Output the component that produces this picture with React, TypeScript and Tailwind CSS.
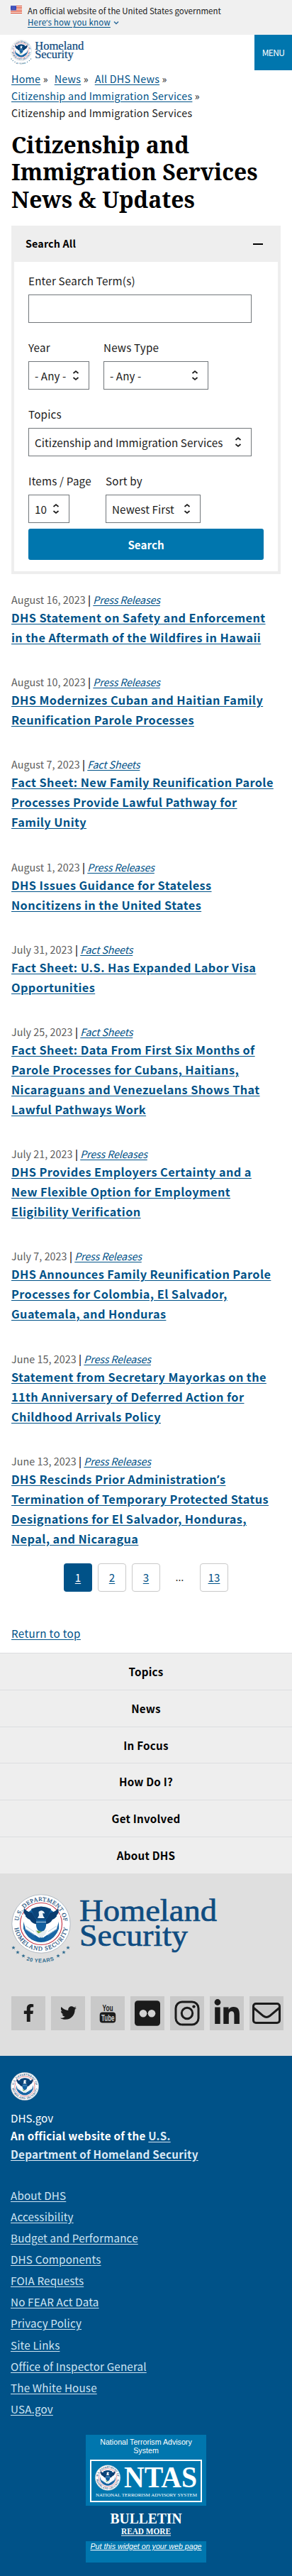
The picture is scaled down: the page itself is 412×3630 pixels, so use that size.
import React from "react";
import { FaFacebookF, FaTwitter } from "react-icons/fa";

const news: { date: string; kind: string; lines: string[] }[] = [
  { date: "August 16, 2023", kind: "Press Releases", lines: ["DHS Statement on Safety and Enforcement", "in the Aftermath of the Wildfires in Hawaii"] },
  { date: "August 10, 2023", kind: "Press Releases", lines: ["DHS Modernizes Cuban and Haitian Family", "Reunification Parole Processes"] },
  { date: "August 7, 2023", kind: "Fact Sheets", lines: ["Fact Sheet: New Family Reunification Parole", "Processes Provide Lawful Pathway for", "Family Unity"] },
  { date: "August 1, 2023", kind: "Press Releases", lines: ["DHS Issues Guidance for Stateless", "Noncitizens in the United States"] },
  { date: "July 31, 2023", kind: "Fact Sheets", lines: ["Fact Sheet: U.S. Has Expanded Labor Visa", "Opportunities"] },
  { date: "July 25, 2023", kind: "Fact Sheets", lines: ["Fact Sheet: Data From First Six Months of", "Parole Processes for Cubans, Haitians,", "Nicaraguans and Venezuelans Shows That", "Lawful Pathways Work"] },
  { date: "July 21, 2023", kind: "Press Releases", lines: ["DHS Provides Employers Certainty and a", "New Flexible Option for Employment", "Eligibility Verification"] },
  { date: "July 7, 2023", kind: "Press Releases", lines: ["DHS Announces Family Reunification Parole", "Processes for Colombia, El Salvador,", "Guatemala, and Honduras"] },
  { date: "June 15, 2023", kind: "Press Releases", lines: ["Statement from Secretary Mayorkas on the", "11th Anniversary of Deferred Action for", "Childhood Arrivals Policy"] },
  { date: "June 13, 2023", kind: "Press Releases", lines: ["DHS Rescinds Prior Administration’s", "Termination of Temporary Protected Status", "Designations for El Salvador, Honduras,", "Nepal, and Nicaragua"] },
];

const sections = ["Topics", "News", "In Focus", "How Do I?", "Get Involved", "About DHS"];

const footerLinks = ["About DHS", "Accessibility", "Budget and Performance", "DHS Components", "FOIA Requests", "No FEAR Act Data", "Privacy Policy", "Site Links", "Office of Inspector General", "The White House", "USA.gov"];

/* The CJK face sets the apostrophe full width, so it takes its own font. */
function Latin({ text }: { text: string }) {
  const parts = text.split("’");
  return (
    <>
      {parts.map((p, i) => (
        <React.Fragment key={i}>
          {i > 0 && <span className="font-['Open_Sans'] leading-none">’</span>}
          {p}
        </React.Fragment>
      ))}
    </>
  );
}

/* Department seal, drawn in an 84x84 box centred on 42,42 */
function SealArt({ id }: { id: string }) {
  return (
    <g>
      <circle cx="42" cy="42" r="41.2" fill="#fff" stroke="#b4bcc4" strokeWidth="1" />
      <defs>
        <path id={id + "t"} d="M10 42a32 32 0 0 1 64 0" />
        <path id={id + "b"} d="M4.200 42a37.800 37.800 0 0 0 75.600 0" />
      </defs>
      <text fontFamily="Liberation Serif" fontSize="8.400" fill="#1c4f7c" stroke="#1c4f7c" strokeWidth=".2">
        <textPath href={"#" + id + "t"} startOffset="4" textLength="93">U.S. DEPARTMENT OF</textPath>
      </text>
      <text fontFamily="Liberation Serif" fontSize="8.400" fill="#1c4f7c" stroke="#1c4f7c" strokeWidth=".2">
        <textPath href={"#" + id + "b"} startOffset="6" textLength="107">HOMELAND SECURITY</textPath>
      </text>
      <circle cx="42" cy="42" r="29.500" fill="#fff" stroke="#c8394a" strokeWidth="1.200" />
      <circle cx="42" cy="43" r="25" fill="#1260a0" />
      <path d="M14 28l6 21 20 13V44zM70 28l-6 21-20 13V44z" fill="#fff" />
      <path d="M17 42l2 8 12 7 5 9q-14-3-19-17zM67 42l-2 8-12 7-5 9q14-3 19-17z" fill="#1a66a5" />
      <path d="M20 45l12 8M19 49l14 9M64 45l-12 8M65 49l-14 9" stroke="#a9c6de" strokeWidth=".8" />
      <path d="M28 21q14-7 28 0l-4 10-4 5H36l-4-5z" fill="#0b4479" />
      <path d="M18 20q5 6 11 6l4 7 5 6v4q-9-1-12-7-5-2-6-6-4-4-2-10zM66 20q-5 6-11 6l-4 7-5 6v4q9-1 12-7 5-2 6-6 4-4 2-10z" fill="#0a3d70" />
      <path d="M38.500 25q4-3.500 7.500 0l1.200 2.500-3-.5.800 4 2 3H37l2-4z" fill="#eef4f8" />
      <path d="M35 36h14v9q-1 7-7 9-6-2-7-9z" fill="#14609f" />
      <path d="M35 39.500h14" stroke="#dbe8f1" strokeWidth=".8" />
      <path d="M33 50l9 3 9-3-3 7-6 5-6-5z" fill="#e4edf0" />
      <path d="M35 51.500l8 1.500-5 2.500z" fill="#6fa844" />
    </g>
  );
}

function Seal({ id, className }: { id: string; className: string }) {
  return (
    <svg viewBox="0 0 84 84" className={className}>
      <SealArt id={id} />
    </svg>
  );
}

function Star({ x, y }: { x: number; y: number }) {
  return <path transform={`translate(${x} ${y})`} d="M0-2.600L.8-.8 2.700-.7 1.200.5 1.700 2.400 0 1.300-1.700 2.400-1.200.5-2.700-.7-.8-.8z" fill="#2d6a8e" />;
}

function DhsLogo({ id, className }: { id: string; className: string }) {
  return (
    <svg viewBox="0 0 292 100" className={className} role="img" aria-label="Homeland Security">
      <SealArt id={id} />
      <Star x={3} y={75.5} />
      <Star x={9} y={82} />
      <Star x={17} y={87} />
      <Star x={66} y={87} />
      <Star x={74} y={82} />
      <Star x={80} y={75.5} />
      <path id={id + "y"} d="M20 93q21 7 42 0" fill="none" />
      <text fontFamily="Liberation Sans" fontSize="7.500" fontWeight="bold" fill="#2d6a8e">
        <textPath href={"#" + id + "y"} startOffset="1" textLength="40">20 YEARS</textPath>
      </text>
      <g fontFamily="Liberation Serif" fill="#0f4c81" stroke="#0f4c81" strokeWidth=".7" fontSize="44">
        <text x="96" y="38" textLength="194" lengthAdjust="spacingAndGlyphs">Homeland</text>
        <text x="96" y="73" textLength="153" lengthAdjust="spacingAndGlyphs">Security</text>
      </g>
    </svg>
  );
}

function Flag() {
  return (
    <svg viewBox="0 0 16 11" className="mt-2 h-[11px] w-4 shrink-0">
      <rect width="16" height="11" fill="#fff" />
      <path d="M0 .5h16M0 2.500h16M0 4.500h16M0 6.500h16M0 8.500h16M0 10.500h16" stroke="#db3e1f" strokeWidth="1" />
      <rect width="8" height="6.500" fill="#1e33b1" />
      <path d="M.5 1.200h7M1.500 3.200h6M.5 5.200h7" stroke="#fff" strokeWidth=".7" strokeDasharray="1 1" />
    </svg>
  );
}

function SelectBox({ value, className }: { value: string; className: string }) {
  return (
    <div className={"flex h-10 items-center justify-between border border-[#71767a] pl-2 pr-[13px] " + className}>
      <span className="whitespace-pre text-[15.200px] leading-[22px] tracking-[0.090px]">{value}</span>
      <svg viewBox="0 0 10 16" className="h-4 w-[10px]" fill="none" stroke="#1b1b1b" strokeWidth="1.700">
        <path d="M1.500 5L5 2l3.500 3M1.500 11L5 14l3.500-3" />
      </svg>
    </div>
  );
}

function Field({ label, children }: { label: string; children: React.ReactNode }) {
  return (
    <div>
      <div className="h-[31px] whitespace-nowrap text-[15.200px] leading-[22px] tracking-[0.190px]">{label}</div>
      {children}
    </div>
  );
}

function Tile({ children }: { children: React.ReactNode }) {
  return <a className="flex size-12 items-center justify-center bg-[#c9c9c9] text-[#1b1b1b]">{children}</a>;
}

const link = "text-[#005288] underline underline-offset-2";
const pageBox = "flex size-10 items-center justify-center rounded border border-[#c9c9c9] pb-px text-[#005288] underline underline-offset-2";

export default function App() {
  return (
    <div className="h-[3630px] w-[412px] overflow-hidden bg-white font-['Noto_Sans_CJK_SC','Source_Sans_Pro',sans-serif] text-[#1b1b1b]">
      <div className="flex h-[49px] bg-[#f0f0f0] pl-[15px]">
        <Flag />
        <div className="ml-2 pt-[7px] text-[11.500px] leading-4">
          <p className="whitespace-nowrap">An official website of the United States government</p>
          <p className="flex items-center whitespace-nowrap tracking-[0.200px]">
            <span className={link}><Latin text="Here’s how you know" /></span>
            <svg viewBox="0 0 8 6" className="ml-1 mt-0.5 h-1.5 w-2" fill="none" stroke="#2d6a9a" strokeWidth="1.500">
              <path d="M1 1.500l3 3 3-3" />
            </svg>
          </p>
        </div>
      </div>

      <header className="flex h-[50px] justify-between pl-[15px]">
        <DhsLogo id="h" className="mt-[7px] h-[36px] w-[104px]" />
        <div className="flex w-[53px] items-center justify-center bg-[#0076ae] text-[12px] tracking-[-0.700px] text-white">MENU</div>
      </header>

      <nav className="h-[86px] pl-4 text-[14.300px] leading-6 tracking-[0.240px]">
        <div className="flex gap-[9px] whitespace-pre">
          <span><a className={link}>Home</a> »</span>
          <span><a className={link}>News</a> »</span>
          <span><a className={link}>All DHS News</a> »</span>
        </div>
        <div><a className={link}>Citizenship and Immigration Services</a> »</div>
        <div>Citizenship and Immigration Services</div>
      </nav>

      <h1 className="h-[133px] whitespace-nowrap pl-4 font-['Noto_Serif',serif] text-[31.900px] font-bold leading-[38.400px] text-black">
        Citizenship and<br />Immigration Services<br />News &amp; Updates
      </h1>

      <section className="ml-4 h-[491px] w-[380px] border-4 border-t-0 border-[#eeeeee]">
        <div className="flex h-[51px] items-center justify-between bg-[#eeeeee] pl-4 pr-[21px]">
          <h2 className="pb-px text-[14.300px] font-bold tracking-[0.140px] text-black">Search All</h2>
          <span className="h-0.5 w-[14px] bg-black" />
        </div>
        <form className="pl-5 pt-[15px]">
          <Field label="Enter Search Term(s)">
            <div className="h-10 w-[315px] border border-[#71767a]" />
          </Field>
          <div className="mt-[23px] flex gap-5">
            <Field label="Year"><SelectBox value="- Any -" className="w-[86px]" /></Field>
            <Field label="News Type"><SelectBox value="- Any -" className="w-[148px]" /></Field>
          </div>
          <div className="mt-[23px]">
            <Field label="Topics"><SelectBox value="Citizenship and Immigration Services" className="w-[315px]" /></Field>
          </div>
          <div className="mt-[23px] flex gap-[21px]">
            <div className="w-[88px]"><Field label="Items / Page"><SelectBox value="10" className="w-[58px]" /></Field></div>
            <Field label="Sort by"><SelectBox value="Newest First" className="w-[134px]" /></Field>
          </div>
          <button type="button" className="mt-2 h-11 w-[332px] rounded-[3px] bg-[#0076ae] text-[15.200px] font-bold text-white">Search</button>
        </form>
      </section>

      <main className="flex flex-col gap-[37.200px] pl-4 pt-6">
        {news.map((n) => (
          <article key={n.date}>
            <p className="h-[23px] whitespace-pre text-[14.300px] leading-6 tracking-[0.060px] text-[#5c5c5c]">
              {n.date} <span className="font-medium text-black">|</span> <a className="italic tracking-[-0.170px] text-[#005288] underline underline-offset-2">{n.kind}</a>
            </p>
            <h3 className="whitespace-nowrap text-[16.300px] font-bold leading-7 tracking-[0.420px] text-[#005288]">
              {n.lines.map((l) => (
                <span key={l} className="block h-7 underline underline-offset-2"><Latin text={l} /></span>
              ))}
            </h3>
          </article>
        ))}
      </main>

      <nav className="mt-[21.200px] flex h-10 gap-2 pl-[90px] text-[15.200px]">
        <a className="flex size-10 items-center justify-center rounded bg-[#005288] pb-px text-white underline underline-offset-2">1</a>
        <a className={pageBox}>2</a>
        <a className={pageBox}>3</a>
        <span className="flex size-10 items-center justify-center font-['Open_Sans'] tracking-[1px]">…</span>
        <a className={pageBox}>13</a>
      </nav>

      <div className="h-[86px] pl-4 pt-[46px] text-[15.200px] leading-[25px] tracking-[0.340px]"><a className={link}>Return to top</a></div>

      <nav className="bg-[#eeeeee]">
        {sections.map((s) => (
          <a key={s} className="flex h-[51.830px] items-center justify-center border-t border-[#dcdee0] text-[15.200px] font-bold tracking-[0.220px] text-black">{s}</a>
        ))}
      </nav>

      <section className="h-[257px] bg-[#dfdfdf] pl-4 pt-[29px]">
        <DhsLogo id="f" className="h-[100px] w-[292px]" />
        <div className="mt-11 flex gap-2">
          <Tile><FaFacebookF size={25} /></Tile>
          <Tile><FaTwitter size={23} /></Tile>
          <Tile>
            <svg viewBox="0 0 48 48" className="size-12" fontFamily="Liberation Sans Narrow, Liberation Sans">
              <text x="16.500" y="21" fontSize="13" fontWeight="bold" fill="#1b1b1b" textLength="15" lengthAdjust="spacingAndGlyphs">You</text>
              <rect x="12.700" y="22.500" width="22.500" height="15" rx="4" fill="#1b1b1b" />
              <text x="15" y="34.500" fontSize="12" fontWeight="bold" fill="#c9c9c9" textLength="18.500" lengthAdjust="spacingAndGlyphs">Tube</text>
            </svg>
          </Tile>
          <Tile>
            <svg viewBox="0 0 48 48" className="size-12">
              <rect x="6" y="6.300" width="36" height="35.500" rx="4.500" fill="#1b1b1b" />
              <circle cx="18" cy="24.300" r="5.300" fill="#d2d2d2" />
              <circle cx="30" cy="24.300" r="5.300" fill="#d2d2d2" />
            </svg>
          </Tile>
          <Tile>
            <svg viewBox="0 0 48 48" className="size-12" fill="none" stroke="#1b1b1b" strokeWidth="3">
              <rect x="8" y="8" width="32" height="32" rx="9" />
              <circle cx="24" cy="24" r="7.700" />
              <circle cx="33.500" cy="14.600" r="2.200" fill="#1b1b1b" stroke="none" />
            </svg>
          </Tile>
          <Tile>
            <svg viewBox="0 0 48 48" className="size-12" fill="#1b1b1b">
              <circle cx="11" cy="8.500" r="4.400" />
              <path d="M7.200 15.500h7.500V39H7.200zM19.300 15.500h7.200v3.200c1.300-2.300 3.700-3.800 7-3.800 6.500 0 8.400 4 8.400 10.300V39h-7.500V26.700c0-3-.4-5.500-3.600-5.500-3.200 0-4 2.500-4 5.300V39h-7.500z" />
            </svg>
          </Tile>
          <Tile>
            <svg viewBox="0 0 48 48" className="size-12" fill="none" stroke="#1b1b1b" strokeWidth="3" strokeLinejoin="round">
              <rect x="5.500" y="10.500" width="37" height="27" rx="3.500" />
              <path d="M6 16.500l13.500 11.300q4.500 3.400 9 0L42 16.500" />
            </svg>
          </Tile>
        </div>
      </section>

      <footer className="h-[733px] bg-[#005288] pl-[15px] pt-[23px]">
        <Seal id="s" className="size-10" />
        <div className="mt-3 text-[15.200px] leading-[25.400px] text-white">
          <p>DHS.gov</p>
          <p className="font-bold tracking-[0.270px]">
            An official website of the <a className="text-[#dceaf6] underline underline-offset-2">U.S.<br />Department of Homeland Security</a>
          </p>
        </div>
        <ul className="mt-[29.800px] text-[15.200px] leading-[30.100px] tracking-[0.170px] text-[#cfe4f2]">
          {footerLinks.map((l) => (
            <li key={l}><a className="underline underline-offset-2">{l}</a></li>
          ))}
        </ul>
        <div className="ml-[106px] mt-[22px] w-[170px] text-center font-['Liberation_Sans'] text-white">
          <div className="h-[100px] bg-[#0076ae] px-1.5 pt-1">
            <p className="text-[10.670px] leading-3">National Terrorism Advisory<br />System</p>
            <svg viewBox="0 0 158 60" className="mt-[7px] h-[60px] w-[158px]">
              <rect x="1" y="1" width="156" height="58" fill="none" stroke="#fff" strokeWidth="2" />
              <g transform="translate(7 7.500) scale(.43)"><SealArt id="n" /></g>
              <text x="48" y="39" fontFamily="Liberation Serif" fontWeight="bold" fontSize="42" fill="#fff" textLength="103" lengthAdjust="spacingAndGlyphs">NTAS</text>
              <text x="8" y="52" fontFamily="Liberation Serif" fontSize="7" fill="#fff" textLength="143" lengthAdjust="spacingAndGlyphs">NATIONAL TERRORISM ADVISORY SYSTEM</text>
            </svg>
          </div>
          <svg viewBox="0 0 170 50" className="h-[50px] w-[170px]" fontFamily="Liberation Serif" fontWeight="bold" fill="#fff">
            <text x="34.500" y="25" fontSize="21" textLength="101" lengthAdjust="spacingAndGlyphs">BULLETIN</text>
            <text x="50" y="39.500" fontSize="12.500" textLength="70" lengthAdjust="spacingAndGlyphs">READ MORE</text>
            <path d="M50 42h70" stroke="#fff" strokeWidth="1" />
          </svg>
          <div className="h-[30px] whitespace-nowrap bg-[#0076ae] pt-px text-[10.670px] italic leading-3 underline">Put this widget on your web page</div>
        </div>
      </footer>
    </div>
  );
}
